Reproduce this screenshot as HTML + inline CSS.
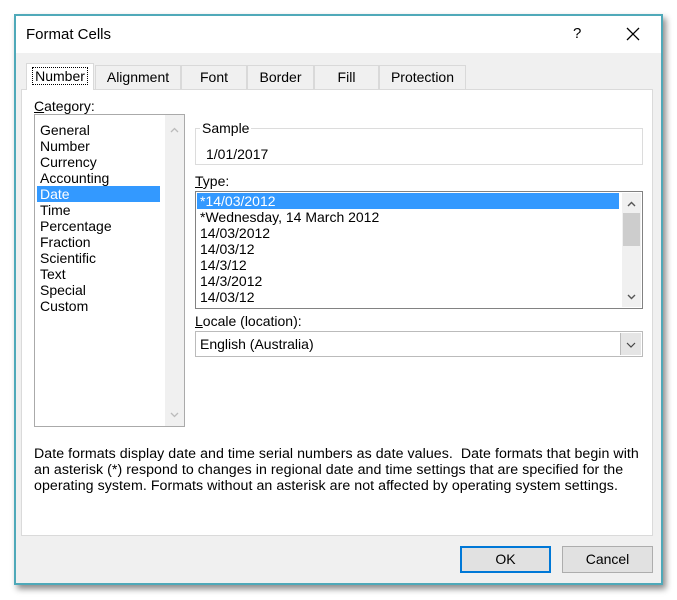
<!DOCTYPE html>
<html><head><style>
*{box-sizing:border-box;margin:0;padding:0}
body{width:677px;height:600px;background:#fff;position:relative;overflow:hidden;font-family:"Liberation Sans",sans-serif;font-size:14px;color:#000}
.dlg{position:absolute;left:14px;top:14px;width:649px;height:571px;border:2px solid #4fa9b9;background:#f0f0f0;box-shadow:3px 4px 6px rgba(0,0,0,.45)}
.title{position:absolute;left:0;top:0;right:0;height:37px;background:#fff}
.a{position:absolute;white-space:nowrap}
.tab{position:absolute;top:49px;height:24px;border:1px solid #d9d9d9;border-bottom:none;background:#f0f0f0;text-align:center;line-height:22px}
.panel{position:absolute;left:5px;top:73px;width:632px;height:447px;background:#fff;border:1px solid #dadada}
.list{position:absolute;background:#fff;border:1px solid #828282}
.sel{background:#3399ff;color:#fff}
.btn{position:absolute;top:530px;width:91px;height:27px;border:1px solid #adadad;background:#e1e1e1;text-align:center;line-height:25px}
u{text-decoration:underline}
</style></head><body>
<div class="dlg">
<div class="title"></div>
<div class="a" style="left:10px;top:10px;font-size:15px">Format Cells</div>
<div class="a" style="left:557px;top:9px;font-size:15px">?</div>
<svg class="a" style="left:610px;top:11px" width="14" height="14"><path d="M1 1L13 13M13 1L1 13" stroke="#000" stroke-width="1.3"/></svg>
<div class="panel"></div>
<div class="tab" style="left:10px;top:47px;width:68px;height:27px;background:#fff;border-color:#d9d9d9;line-height:24px"><span style="border:1px dotted #000;padding:0 2px">Number</span></div>
<div class="tab" style="left:79px;width:86px">Alignment</div>
<div class="tab" style="left:165px;width:66px">Font</div>
<div class="tab" style="left:231px;width:67px">Border</div>
<div class="tab" style="left:298px;width:65px">Fill</div>
<div class="tab" style="left:363px;width:87px">Protection</div>

<div class="a" style="left:18px;top:82px"><u>C</u>ategory:</div>
<div class="list" style="left:18px;top:98px;width:151px;height:313px;border-color:#aaa">
 <div style="position:absolute;right:0;top:0;width:19px;height:311px;background:#f0f0f0"></div>
 <svg style="position:absolute;right:5px;top:12px" width="9" height="6"><path d="M1 5L4.5 1.5L8 5" stroke="#bbb" fill="none" stroke-width="1.3"/></svg>
 <svg style="position:absolute;right:5px;bottom:8px" width="9" height="6"><path d="M1 1L4.5 4.5L8 1" stroke="#bbb" fill="none" stroke-width="1.3"/></svg>
 <div style="position:absolute;left:2px;top:7px;width:123px;line-height:16px">
  <div style="padding-left:3px">General</div><div style="padding-left:3px">Number</div><div style="padding-left:3px">Currency</div><div style="padding-left:3px">Accounting</div><div class="sel" style="padding-left:3px">Date</div><div style="padding-left:3px">Time</div><div style="padding-left:3px">Percentage</div><div style="padding-left:3px">Fraction</div><div style="padding-left:3px">Scientific</div><div style="padding-left:3px">Text</div><div style="padding-left:3px">Special</div><div style="padding-left:3px">Custom</div>
 </div>
</div>

<div style="position:absolute;left:179px;top:112px;width:448px;height:37px;border:1px solid #dcdcdc;background:#fff"></div>
<div class="a" style="left:184px;top:104px;background:#fff;padding:0 2px">Sample</div>
<div class="a" style="left:190px;top:130px">1/01/2017</div>

<div class="a" style="left:179px;top:157px"><u>T</u>ype:</div>
<div class="list" style="left:179px;top:175px;width:448px;height:118px">
 <div style="position:absolute;right:1px;top:1px;width:19px;height:114px;background:#f0f0f0"></div>
 <div style="position:absolute;right:2px;top:21px;width:17px;height:33px;background:#cdcdcd"></div>
 <svg style="position:absolute;right:6px;top:9px" width="9" height="6"><path d="M1 5L4.5 1.5L8 5" stroke="#555" fill="none" stroke-width="1.4"/></svg>
 <svg style="position:absolute;right:6px;bottom:8px" width="9" height="6"><path d="M1 1L4.5 4.5L8 1" stroke="#555" fill="none" stroke-width="1.4"/></svg>
 <div style="position:absolute;left:1px;top:1px;width:422px;line-height:16px">
  <div class="sel" style="padding-left:3px">*14/03/2012</div><div style="padding-left:3px">*Wednesday, 14 March 2012</div><div style="padding-left:3px">14/03/2012</div><div style="padding-left:3px">14/03/12</div><div style="padding-left:3px">14/3/12</div><div style="padding-left:3px">14/3/2012</div><div style="padding-left:3px">14/03/12</div>
 </div>
</div>

<div class="a" style="left:179px;top:297px"><u>L</u>ocale (location):</div>
<div style="position:absolute;left:179px;top:315px;width:448px;height:26px;border:1px solid #bbb;background:#fff">
 <div class="a" style="left:4px;top:4px">English (Australia)</div>
 <div style="position:absolute;right:1px;top:1px;width:21px;height:22px;background:#e5e5e5;border-left:1px solid #bbb"></div>
 <svg style="position:absolute;right:6px;top:10px" width="10" height="6"><path d="M1 1L5 5L9 1" stroke="#444" fill="none" stroke-width="1.2"/></svg>
</div>

<div class="a" style="left:18px;top:430px;line-height:16px;font-size:14.2px;letter-spacing:0.05px">Date formats display date and time serial numbers as date values.&nbsp; Date formats that begin with<br>an asterisk (*) respond to changes in regional date and time settings that are specified for the<br>operating system. Formats without an asterisk are not affected by operating system settings.</div>

<div class="btn" style="left:444px;border:2px solid #0078d7;line-height:23px">OK</div>
<div class="btn" style="left:546px">Cancel</div>
</div>
</body></html>
